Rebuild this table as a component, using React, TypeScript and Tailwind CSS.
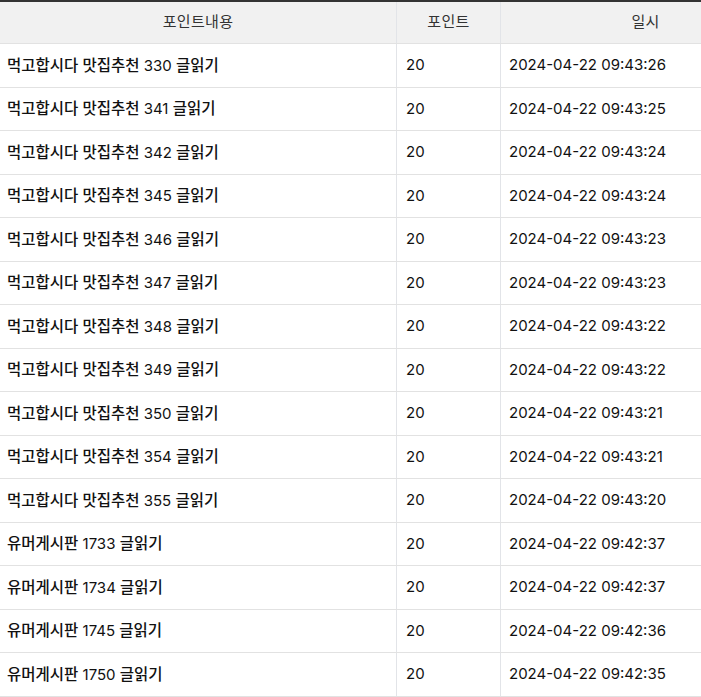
import React from "react";

const rows: [string, string, string][] = [
  ["먹고합시다 맛집추천", "330", "2024-04-22 09:43:26"],
  ["먹고합시다 맛집추천", "341", "2024-04-22 09:43:25"],
  ["먹고합시다 맛집추천", "342", "2024-04-22 09:43:24"],
  ["먹고합시다 맛집추천", "345", "2024-04-22 09:43:24"],
  ["먹고합시다 맛집추천", "346", "2024-04-22 09:43:23"],
  ["먹고합시다 맛집추천", "347", "2024-04-22 09:43:23"],
  ["먹고합시다 맛집추천", "348", "2024-04-22 09:43:22"],
  ["먹고합시다 맛집추천", "349", "2024-04-22 09:43:22"],
  ["먹고합시다 맛집추천", "350", "2024-04-22 09:43:21"],
  ["먹고합시다 맛집추천", "354", "2024-04-22 09:43:21"],
  ["먹고합시다 맛집추천", "355", "2024-04-22 09:43:20"],
  ["유머게시판", "1733", "2024-04-22 09:42:37"],
  ["유머게시판", "1734", "2024-04-22 09:42:37"],
  ["유머게시판", "1745", "2024-04-22 09:42:36"],
  ["유머게시판", "1750", "2024-04-22 09:42:35"],
];

export default function App() {
  return (
    <div className="w-[701px] h-[697px] overflow-hidden bg-white font-['Inter','Noto_Sans_CJK_KR',sans-serif]">
      <div className="w-[790px] border-t-2 border-[#333333]">
        <div className="flex h-[42px] bg-[#f1f1f1] border-b border-[#e2e2e2] text-[15px] text-[#333333]">
          <div className="w-[396px] flex items-center justify-center tracking-[0.3px]">포인트내용</div>
          <div className="w-[104px] flex items-center justify-center border-l border-[#e2e4e8] tracking-[0.3px]">포인트</div>
          <div className="flex-1 flex items-center justify-center border-l border-[#e2e4e8] tracking-[0.3px]">일시</div>
        </div>
        {rows.map(([board, num, date], i) => (
          <div
            key={i}
            className="flex h-[43.5px] border-b border-[#e2e2e2] text-[15px] text-[#111111]"
          >
            <div className="w-[396px] flex items-center pl-[7px]">
              <span className="whitespace-pre">
                <span className="text-[15.5px] font-medium">{board}</span>
                {" " + num + " "}
                <span className="text-[15.5px] font-medium">글읽기</span>
              </span>
            </div>
            <div className="w-[104px] flex items-center pl-[9px] border-l border-[#e2e4e8]">20</div>
            <div className="flex-1 flex items-center pl-[8px] border-l border-[#e2e4e8]">{date}</div>
          </div>
        ))}
      </div>
    </div>
  );
}
